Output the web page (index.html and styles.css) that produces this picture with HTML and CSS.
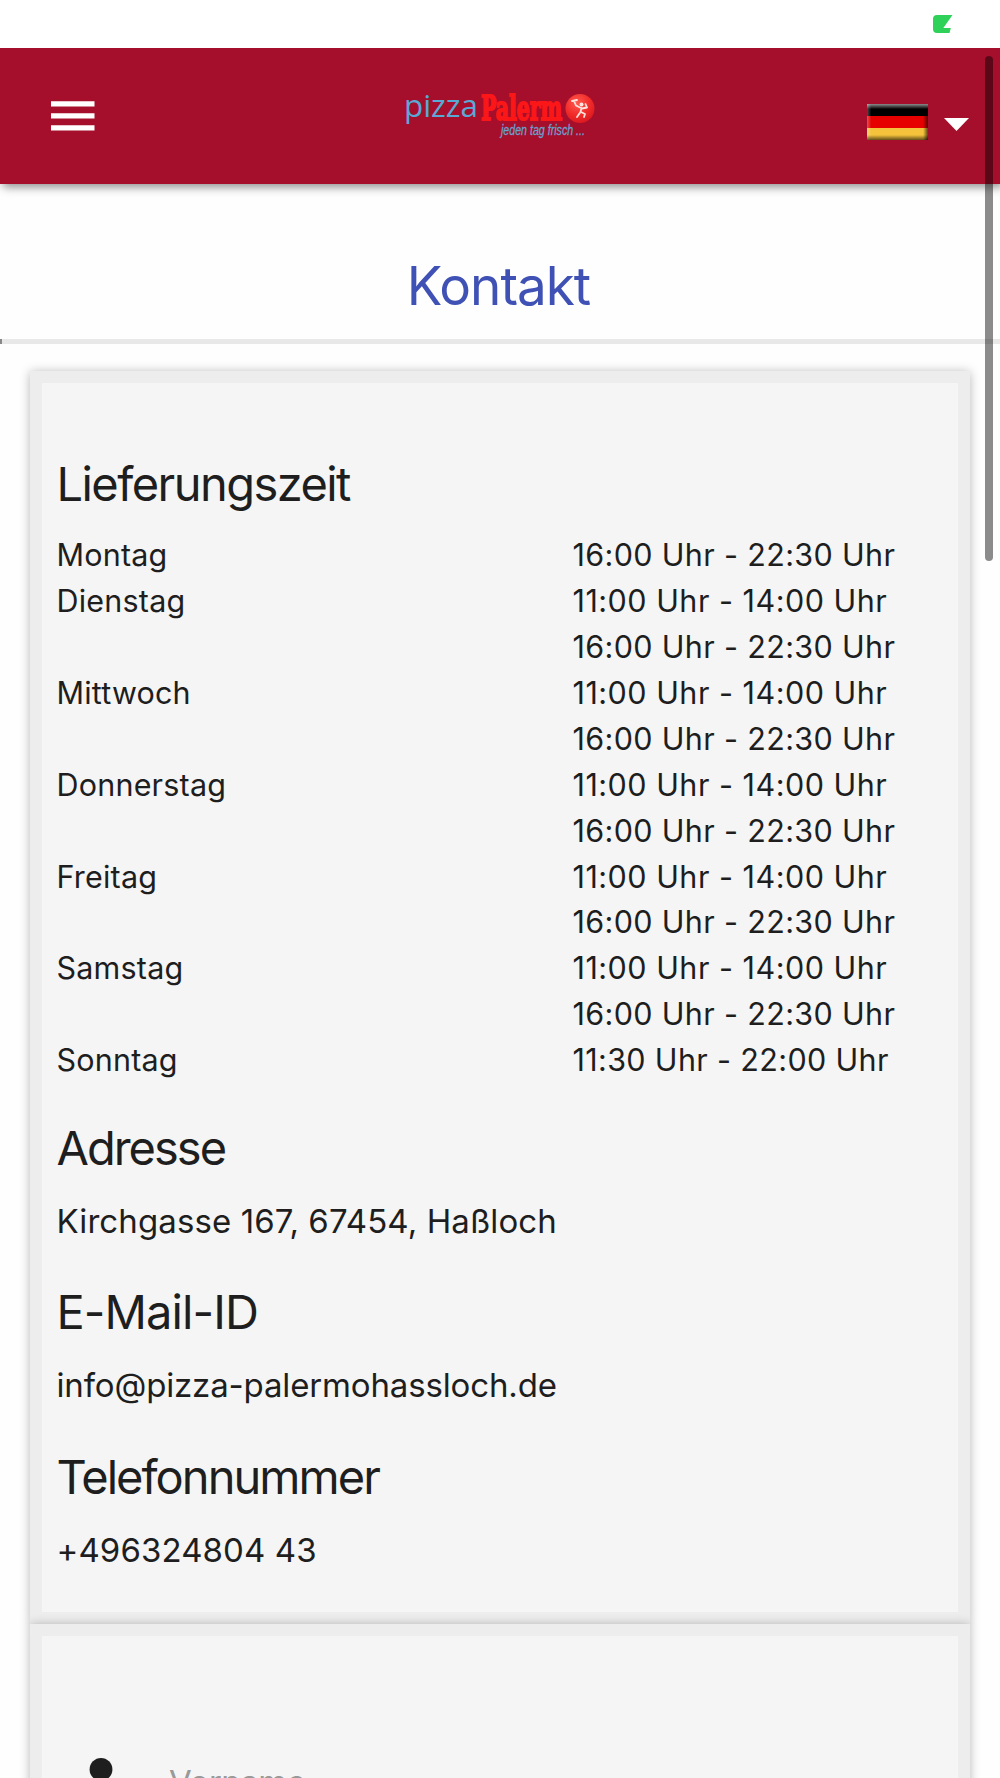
FILE: index.html
```
<!DOCTYPE html>
<html lang="de">
<head>
  <meta charset="UTF-8">
  <meta name="viewport" content="width=device-width, initial-scale=1.0">
  <title>Pizza Palermo - Kontakt</title>
  <link rel="stylesheet" href="styles.css">
</head>
<body>
  <div class="status-bar">
    <svg class="battery" width="20" height="18" viewBox="0 0 20 18"><path d="M4 0H19.5L10.3 13H17.8L16.5 18H4Q0 18 0 14V4Q0 0 4 0Z"/></svg>
  </div>

  <header class="toolbar">
    <button class="menu-button" title="Menü">
      <svg width="44" height="30" viewBox="0 0 44 30"><path d="M0 .3h43.5v5.2H0zM0 12.3h43.5v5.2H0zM0 24.3h43.5v5.2H0z"/></svg>
    </button>
    <svg class="logo" width="200" height="70" viewBox="0 -10 200 70">
      <defs>
        <radialGradient id="ball" cx=".4" cy=".3" r=".75">
          <stop offset="0" stop-color="#ff5a50"/>
          <stop offset=".6" stop-color="#f02a28"/>
          <stop offset="1" stop-color="#d81820"/>
        </radialGradient>
      </defs>
      <text class="logo-pizza" x="4" y="27.500" textLength="74" lengthAdjust="spacingAndGlyphs">pizza</text>
      <text class="logo-palermo" x="81" y="30.500" textLength="81" lengthAdjust="spacingAndGlyphs">Palerm</text>
      <circle cx="180" cy="19.5" r="14.5" fill="url(#ball)"/>
      <g class="logo-cook">
        <circle cx="181.500" cy="15.500" r="2"/>
        <path d="M172 12l5-1M174 12l2 4.500 6 3 5-1-1.500-3.500M181.500 19l-1 4-3.500 5M181 23l4 2-1 3"/>
      </g>
      <text class="logo-slogan" x="101" y="46" textLength="84" lengthAdjust="spacingAndGlyphs">jeden tag frisch ...</text>
    </svg>
    <div class="language">
      <svg class="flag" width="61" height="36" viewBox="0 0 61 36">
        <defs>
          <linearGradient id="edge" x1="0" x2="1" y1="0" y2="0">
            <stop offset="0" stop-color="#fff" stop-opacity=".3"/>
            <stop offset=".07" stop-color="#fff" stop-opacity="0"/>
            <stop offset=".92" stop-color="#000" stop-opacity="0"/>
            <stop offset="1" stop-color="#000" stop-opacity=".65"/>
          </linearGradient>
          <linearGradient id="bevel" x1="0" x2="0" y1="0" y2="1">
            <stop offset="0" stop-color="#fff" stop-opacity=".55"/>
            <stop offset=".14" stop-color="#fff" stop-opacity="0"/>
            <stop offset=".86" stop-color="#000" stop-opacity="0"/>
            <stop offset="1" stop-color="#000" stop-opacity=".6"/>
          </linearGradient>
        </defs>
        <path fill="#000" d="M0 0h61v12H0z"/>
        <path fill="#e60000" d="M0 12h61v12H0z"/>
        <path fill="#f5c33b" d="M0 24h61v12H0z"/>
        <path fill="url(#edge)" d="M0 0h61v36H0z"/>
        <path fill="url(#bevel)" d="M0 0h61v36H0z"/>
      </svg>
      <svg class="arrow" width="25" height="13" viewBox="0 0 25 13"><path d="M0 0h25L12.500 13z"/></svg>
    </div>
  </header>

  <main>
    <h1>Kontakt</h1>
    <hr>
    <section class="card">
      <h2>Lieferungszeit</h2>
      <dl class="hours">
        <dt>Montag</dt><dd>16:00 Uhr - 22:30 Uhr</dd>
        <dt>Dienstag</dt><dd class="early">11:00 Uhr - 14:00 Uhr</dd>
        <dd>16:00 Uhr - 22:30 Uhr</dd>
        <dt>Mittwoch</dt><dd class="early">11:00 Uhr - 14:00 Uhr</dd>
        <dd>16:00 Uhr - 22:30 Uhr</dd>
        <dt>Donnerstag</dt><dd class="early">11:00 Uhr - 14:00 Uhr</dd>
        <dd>16:00 Uhr - 22:30 Uhr</dd>
        <dt>Freitag</dt><dd class="early">11:00 Uhr - 14:00 Uhr</dd>
        <dd>16:00 Uhr - 22:30 Uhr</dd>
        <dt>Samstag</dt><dd class="early">11:00 Uhr - 14:00 Uhr</dd>
        <dd>16:00 Uhr - 22:30 Uhr</dd>
        <dt>Sonntag</dt><dd>11:30 Uhr - 22:00 Uhr</dd>
      </dl>
      <h2 class="address-title">Adresse</h2>
      <p class="address">Kirchgasse 167, 67454, Haßloch</p>
      <h2 class="mail-title">E-Mail-ID</h2>
      <p class="mail">info@pizza-palermohassloch.de</p>
      <h2 class="phone-title">Telefonnummer</h2>
      <p class="phone">+496324804 43</p>
    </section>
    <section class="card card-form">
      <div class="field">
        <svg class="person" width="46" height="52" viewBox="0 0 46 52"><circle cx="23" cy="11.400" r="11.400"/><path d="M0 46V40c0-8 15-12 23-12s23 4 23 12v6z"/></svg>
        <label>Vorname</label>
      </div>
    </section>
  </main>
  <div class="scrollbar"></div>
</body>
</html>
```

FILE: styles.css
```
* { box-sizing: border-box; }
html, body { height: 100%; }
body { position: relative; display: flex; flex-direction: column; margin: 0; overflow: hidden; background-color: #fefefe; color: #1e1e1e; font-family: Inter, Roboto, sans-serif; }

/* Kopfbereich */
.status-bar { position: relative; z-index: 2; flex: none; display: flex; justify-content: flex-end; height: 48px; padding: 15px 47px 0 0; background: #fff; }
.battery { fill: #30d158; }
.toolbar { position: relative; z-index: 1; flex: none; display: grid; grid-template-columns: 1fr 200px 1fr; height: 135.5px; padding: 0 31px 0 51px; background-color: #a50f2b; box-shadow: 3px 3px 9px rgba(0,0,0,0.45); }
.menu-button { justify-self: start; display: flex; margin-top: 53px; padding: 0; height: 30px; border: none; background: none; cursor: pointer; }
.menu-button svg { fill: #fff; }
.logo { margin-top: 31px; margin-left: -10px; overflow: visible; }
.logo-pizza { font-family: "Open Sans", sans-serif; font-size: 31px; font-weight: 400; fill: #59a9d6; }
.logo-palermo { font-family: "DejaVu Serif", serif; font-size: 33px; font-weight: bold; fill: #fb1718; stroke: #fb1718; stroke-width: 2px; }
.logo-slogan { font-family: "Liberation Sans", sans-serif; font-size: 14px; font-style: italic; fill: #6a9fce; stroke: #6a9fce; stroke-width: .3px; }
.logo-cook { fill: #ffe3dc; }
.logo-cook path { fill: none; stroke: #ffe3dc; stroke-width: 1.8px; stroke-linecap: round; stroke-linejoin: round; }
.language { justify-self: end; display: flex; align-items: flex-start; gap: 16px; padding-top: 56px; }
.arrow { margin-top: 14px; fill: #fff; }

/* Inhalt */
main { flex: 1; min-height: 0; overflow: hidden; }
h1 { margin: 67px 0 0; padding-right: 3px; text-align: center; color: #3f51b5; font-size: 53px; font-weight: 400; line-height: 70px; letter-spacing: -1px; }
hr { height: 5px; margin: 18.500px 0 27px; border: none; border-left: 2px solid #888; background-color: #e8e8e8; }
.card { width: 940px; height: 1253px; margin: 0 auto; padding: 71px 15px 0 14.500px; border: 12px solid #ededed; background-color: #f5f5f5; box-shadow: 0 1px 10px rgba(0,0,0,0.28); }
h2 { margin: 0; font-size: 47px; font-weight: 400; line-height: 60px; letter-spacing: -1.55px; }
.hours { display: grid; grid-template-columns: 516px 1fr; grid-auto-rows: 45.9px; margin: 18.300px 0 35px; font-size: 30.500px; line-height: 45.900px; }
.hours dt { grid-column: 1; letter-spacing: 0.2px; }
.hours dd { grid-column: 2; margin: 0; letter-spacing: 0.35px; font-kerning: none; }
.hours .early { letter-spacing: 0.5px; }
.card p { margin: 18px 0 36.400px; font-size: 33px; line-height: 50px; }
.address-title { letter-spacing: -2px; }
.mail-title { letter-spacing: -0.9px; }
.phone-title { letter-spacing: -1.95px; }
.address, .phone { letter-spacing: 0.1px; }
.mail { letter-spacing: -0.15px; }
.card-form { padding: 122px 42px 0 36px; }
.field { display: flex; align-items: flex-start; gap: 45px; }
.person { fill: #1e1e1e; }
.field label { font-size: 33px; line-height: 49px; letter-spacing: -0.5px; color: #999; }

.scrollbar { position: absolute; z-index: 3; top: 56px; right: 7px; width: 8px; height: 505px; border-radius: 4px; background-color: rgba(0,0,0,0.45); }
```
